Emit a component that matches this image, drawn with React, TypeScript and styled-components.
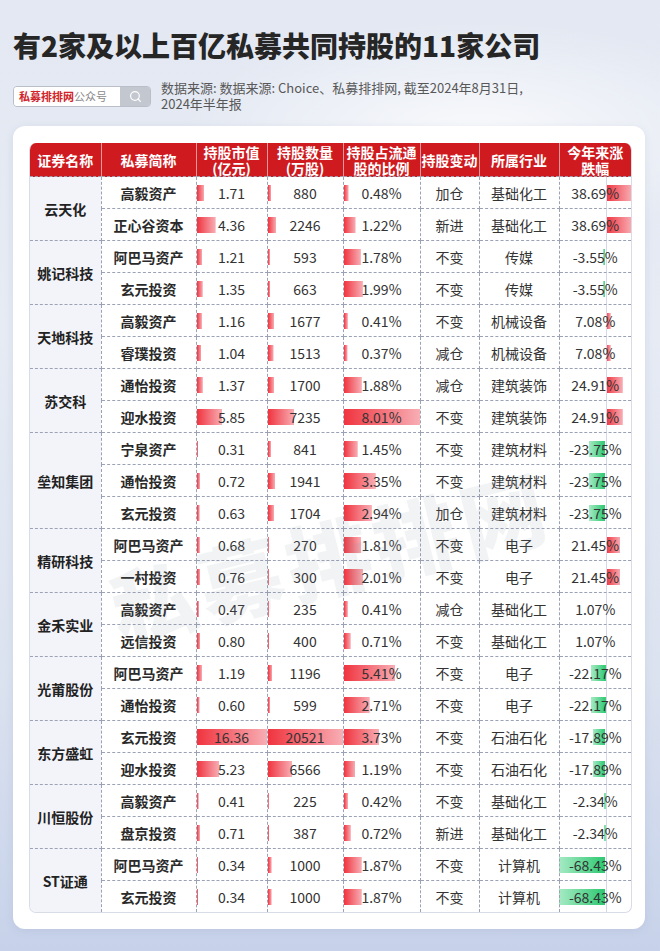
import React from "react"
import styled, { createGlobalStyle } from "styled-components"
import { Search } from "lucide-react"

const GlobalStyle = createGlobalStyle`
    body {
        margin: 0;
        font-family: "Noto Sans CJK SC", "Noto Sans", sans-serif;
        color: #333333;
    }
`

interface Holder {
    fund: string
    value: number
    shares: number
    ratio: number
    change: string
}

interface Company {
    name: string
    industry: string
    ytd: number
    holders: Holder[]
}

const h = (fund: string, value: number, shares: number, ratio: number, change: string): Holder => ({
    fund,
    value,
    shares,
    ratio,
    change,
})

const companies: Company[] = [
    { name: "云天化", industry: "基础化工", ytd: 38.69, holders: [h("高毅资产", 1.71, 880, 0.48, "加仓"), h("正心谷资本", 4.36, 2246, 1.22, "新进")] },
    { name: "姚记科技", industry: "传媒", ytd: -3.55, holders: [h("阿巴马资产", 1.21, 593, 1.78, "不变"), h("玄元投资", 1.35, 663, 1.99, "不变")] },
    { name: "天地科技", industry: "机械设备", ytd: 7.08, holders: [h("高毅资产", 1.16, 1677, 0.41, "不变"), h("睿璞投资", 1.04, 1513, 0.37, "减仓")] },
    { name: "苏交科", industry: "建筑装饰", ytd: 24.91, holders: [h("通怡投资", 1.37, 1700, 1.88, "减仓"), h("迎水投资", 5.85, 7235, 8.01, "不变")] },
    {
        name: "垒知集团",
        industry: "建筑材料",
        ytd: -23.75,
        holders: [h("宁泉资产", 0.31, 841, 1.45, "不变"), h("通怡投资", 0.72, 1941, 3.35, "不变"), h("玄元投资", 0.63, 1704, 2.94, "加仓")],
    },
    { name: "精研科技", industry: "电子", ytd: 21.45, holders: [h("阿巴马资产", 0.68, 270, 1.81, "不变"), h("一村投资", 0.76, 300, 2.01, "不变")] },
    { name: "金禾实业", industry: "基础化工", ytd: 1.07, holders: [h("高毅资产", 0.47, 235, 0.41, "减仓"), h("远信投资", 0.8, 400, 0.71, "不变")] },
    { name: "光莆股份", industry: "电子", ytd: -22.17, holders: [h("阿巴马资产", 1.19, 1196, 5.41, "不变"), h("通怡投资", 0.6, 599, 2.71, "不变")] },
    { name: "东方盛虹", industry: "石油石化", ytd: -17.89, holders: [h("玄元投资", 16.36, 20521, 3.73, "不变"), h("迎水投资", 5.23, 6566, 1.19, "不变")] },
    { name: "川恒股份", industry: "基础化工", ytd: -2.34, holders: [h("高毅资产", 0.41, 225, 0.42, "不变"), h("盘京投资", 0.71, 387, 0.72, "新进")] },
    { name: "ST证通", industry: "计算机", ytd: -68.43, holders: [h("阿巴马资产", 0.34, 1000, 1.87, "不变"), h("玄元投资", 0.34, 1000, 1.87, "不变")] },
]

const columns = [
    { title: ["证券名称"], width: 71 },
    { title: ["私募简称"], width: 95 },
    { title: ["持股市值", "(亿元)"], width: 71 },
    { title: ["持股数量", "(万股)"], width: 76 },
    { title: ["持股占流通", "股的比例"], width: 77 },
    { title: ["持股变动"], width: 59 },
    { title: ["所属行业"], width: 80 },
    { title: ["今年来涨", "跌幅"], width: 72 },
]

const AXIS = 46
const YTD_SCALE = 0.675

const Page = styled.div`
    min-height: 951px;
    box-sizing: border-box;
    padding: 28px 15px 23px 13px;
    background:
        radial-gradient(ellipse 420px 160px at 72% 14%, rgba(255, 255, 255, 0.75), rgba(255, 255, 255, 0) 70%),
        linear-gradient(180deg, #e3e8f2 0%, #e6ebf4 35%, #dce3f0 70%, #c7d2ea 100%);
`

const Title = styled.h1`
    margin: 0;
    font-size: 28px;
    line-height: 34px;
    font-weight: 900;
    color: #262626;
`

const SourceRow = styled.div`
    display: flex;
    align-items: center;
    gap: 10px;
    margin-top: 18px;
`

const SearchBox = styled.div`
    display: flex;
    height: 21px;
    width: 138px;
    flex-shrink: 0;
    border: 1px solid #b9bec8;
    border-radius: 4px;
    overflow: hidden;
    box-sizing: border-box;
`

const SearchLabel = styled.div`
    flex: 1;
    display: flex;
    align-items: center;
    padding-left: 5px;
    background: #ffffff;
    font-size: 11px;
    color: #8a8a8a;
    white-space: nowrap;

    b {
        color: #d0252b;
        font-weight: 700;
    }
`

const SearchButton = styled.div`
    width: 30px;
    display: flex;
    align-items: center;
    justify-content: center;
    background: #c3c7cf;
    color: #ffffff;
`

const SourceText = styled.div`
    font-size: 13px;
    line-height: 16px;
    color: #585858;
`

const Card = styled.div`
    position: relative;
    margin-top: 14px;
    background: #ffffff;
    border-radius: 12px;
    padding: 17px 13px 16px 16px;
    box-shadow: 0 2px 8px rgba(120, 135, 170, 0.15);
    overflow: hidden;
`

const TableFrame = styled.div`
    border: 1px solid #d8dce6;
    border-top: none;
    border-radius: 7px;
    overflow: hidden;
`

const Table = styled.table`
    width: 601px;
    table-layout: fixed;
    border-collapse: collapse;
    border-style: hidden;
`

const HeadCell = styled.th`
    height: 33px;
    padding: 0;
    background: #cf1b20;
    color: #ffffff;
    font-size: 14px;
    font-weight: 700;
    border-right: 1px solid rgba(255, 255, 255, 0.55);
    text-align: center;
    white-space: nowrap;

    &:last-child {
        border-right: none;
    }
`

const HeadLine = styled.div`
    line-height: 16px;
    height: 16px;
`

const Cell = styled.td`
    height: 31px;
    padding: 0;
    border: 1px dashed #9ca2b6;
    text-align: center;
    font-size: 14px;
    color: #333333;
    white-space: nowrap;
`

const NameCell = styled(Cell)`
    background: #f2f4fa;
    font-weight: 700;
    color: #222222;
`

const FundCell = styled(Cell)`
    font-weight: 700;
    color: #2a2a2a;
`

const BarCell = styled(Cell)<{ $w: number }>`
    background-image: linear-gradient(90deg, #f0343f 0%, #f8aeb5 100%);
    background-repeat: no-repeat;
    background-size: ${(p) => p.$w}px 16px;
    background-position: 0 center;
`

const TrendCell = styled(Cell)<{ $w: number; $neg: boolean }>`
    background-image: linear-gradient(#d4d9e5, #d4d9e5),
        ${(p) =>
            p.$neg
                ? "linear-gradient(270deg, #2cc870 0%, #a6eac4 100%)"
                : "linear-gradient(90deg, #f0343f 0%, #f8aeb5 100%)"};
    background-repeat: no-repeat;
    background-size: 1px 100%, ${(p) => p.$w}px 16px;
    background-position: ${AXIS}px 0, ${(p) => (p.$neg ? AXIS - p.$w : AXIS)}px center;
`

const Watermark = styled.div`
    position: absolute;
    left: 92px;
    top: 368px;
    font-size: 84px;
    font-weight: 900;
    letter-spacing: 6px;
    color: rgba(130, 134, 148, 0.1);
    transform: rotate(-14deg);
    pointer-events: none;
    white-space: nowrap;
`

const fmt = (n: number) => n.toFixed(2)

export default function App() {
    return (
        <>
            <GlobalStyle />
            <Page>
                <Title>有2家及以上百亿私募共同持股的11家公司</Title>
                <SourceRow>
                    <SearchBox>
                        <SearchLabel>
                            <b>私募排排网</b>公众号
                        </SearchLabel>
                        <SearchButton>
                            <Search size={13} strokeWidth={2.2} />
                        </SearchButton>
                    </SearchBox>
                    <SourceText>
                        数据来源: 数据来源: Choice、私募排排网, 截至2024年8月31日,
                        <br />
                        2024年半年报
                    </SourceText>
                </SourceRow>
                <Card>
                    <TableFrame>
                        <Table>
                            <colgroup>
                                {columns.map((c, i) => (
                                    <col key={i} style={{ width: c.width }} />
                                ))}
                            </colgroup>
                            <thead>
                                <tr>
                                    {columns.map((c, i) => (
                                        <HeadCell key={i}>
                                            {c.title.map((t, j) => (
                                                <HeadLine key={j}>{t}</HeadLine>
                                            ))}
                                        </HeadCell>
                                    ))}
                                </tr>
                            </thead>
                            <tbody>
                                {companies.map((co) =>
                                    co.holders.map((hd, i) => (
                                        <tr key={co.name + i}>
                                            {i === 0 && <NameCell rowSpan={co.holders.length}>{co.name}</NameCell>}
                                            <FundCell>{hd.fund}</FundCell>
                                            <BarCell $w={Math.max(1, (hd.value / 16.36) * 70)}>{fmt(hd.value)}</BarCell>
                                            <BarCell $w={Math.max(1, (hd.shares / 20521) * 75)}>{hd.shares}</BarCell>
                                            <BarCell $w={(hd.ratio / 8.01) * 76}>{fmt(hd.ratio)}%</BarCell>
                                            <Cell>{hd.change}</Cell>
                                            <Cell>{co.industry}</Cell>
                                            <TrendCell $w={Math.abs(co.ytd) * YTD_SCALE} $neg={co.ytd < 0}>
                                                {fmt(co.ytd)}%
                                            </TrendCell>
                                        </tr>
                                    ))
                                )}
                            </tbody>
                        </Table>
                    </TableFrame>
                    <Watermark>私募排排网</Watermark>
                </Card>
            </Page>
        </>
    )
}
